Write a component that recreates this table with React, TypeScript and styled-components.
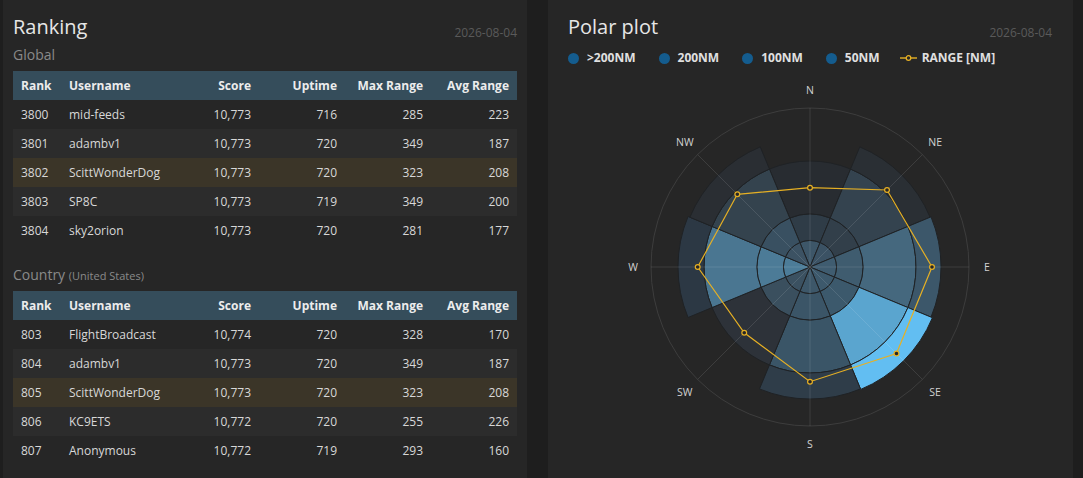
import React from 'react';
import styled, { createGlobalStyle } from 'styled-components';

const GlobalStyle = createGlobalStyle`
  html, body {
    margin: 0;
    padding: 0;
    background: #1e1e1e;
  }
  body {
    font-family: "Open Sans", "Liberation Sans", sans-serif;
  }
`;

type Row = {
  rank: number;
  user: string;
  score: string;
  uptime: number;
  max: number;
  avg: number;
  mine?: boolean;
};

const GLOBAL_ROWS: Row[] = [
  { rank: 3800, user: 'mid-feeds', score: '10,773', uptime: 716, max: 285, avg: 223 },
  { rank: 3801, user: 'adambv1', score: '10,773', uptime: 720, max: 349, avg: 187 },
  { rank: 3802, user: 'ScittWonderDog', score: '10,773', uptime: 720, max: 323, avg: 208, mine: true },
  { rank: 3803, user: 'SP8C', score: '10,773', uptime: 719, max: 349, avg: 200 },
  { rank: 3804, user: 'sky2orion', score: '10,773', uptime: 720, max: 281, avg: 177 },
];

const COUNTRY_ROWS: Row[] = [
  { rank: 803, user: 'FlightBroadcast', score: '10,774', uptime: 720, max: 328, avg: 170 },
  { rank: 804, user: 'adambv1', score: '10,773', uptime: 720, max: 349, avg: 187 },
  { rank: 805, user: 'ScittWonderDog', score: '10,773', uptime: 720, max: 323, avg: 208, mine: true },
  { rank: 806, user: 'KC9ETS', score: '10,772', uptime: 720, max: 255, avg: 226 },
  { rank: 807, user: 'Anonymous', score: '10,772', uptime: 719, max: 293, avg: 160 },
];

const COLUMNS = [
  { label: 'Rank', width: 48, align: 'left' },
  { label: 'Username', width: 112, align: 'left' },
  { label: 'Score', width: 86, align: 'right' },
  { label: 'Uptime', width: 86, align: 'right' },
  { label: 'Max Range', width: 86, align: 'right' },
  { label: 'Avg Range', width: 86, align: 'right' },
] as const;

// polar chart geometry (px): 50NM = 26.5, 100NM = 53, 200NM = 106, 300NM = 159
const CX = 242;
const CY = 192;
const RINGS = [0, 26.5, 53, 106];
const OUTER = 159;

const SECTORS = [
  { dir: 'N', angle: 0, outer: 106, range: 79.3, fills: ['#3d5668', '#2f3c47', '#282c31'] },
  { dir: 'NE', angle: 45, outer: 130, range: 108.9, fills: ['#3b5264', '#323f4a', '#34434f', '#2a2f34'] },
  { dir: 'E', angle: 90, outer: 131, range: 122, fills: ['#3f5c70', '#3f5c6f', '#45687e', '#3c576a'] },
  { dir: 'SE', angle: 135, outer: 132.5, range: 122.3, fills: ['#3d596c', '#3c596c', '#5aa5cf', '#62bef2'] },
  { dir: 'S', angle: 180, outer: 132, range: 114.7, fills: ['#3d5769', '#3b5567', '#3a5567', '#2f3d49'] },
  { dir: 'SW', angle: 225, outer: 106, range: 93, fills: ['#3b5161', '#3a4f5e', '#2d3239'] },
  { dir: 'W', angle: 270, outer: 132, range: 112.3, fills: ['#4c7c98', '#4c7b97', '#4a7691', '#2c3844'] },
  { dir: 'NW', angle: 315, outer: 130, range: 102.8, fills: ['#3c5263', '#395061', '#34434e', '#2a2e33'] },
];

const pt = (deg: number, r: number) => {
  const a = (deg * Math.PI) / 180;
  return [CX + r * Math.sin(a), CY - r * Math.cos(a)];
};

const f = (n: number) => n.toFixed(2);

const segment = (a1: number, a2: number, r0: number, r1: number) => {
  const [ox1, oy1] = pt(a1, r1);
  const [ox2, oy2] = pt(a2, r1);
  if (r0 === 0) {
    return `M${CX},${CY} L${f(ox1)},${f(oy1)} A${r1},${r1} 0 0 1 ${f(ox2)},${f(oy2)} Z`;
  }
  const [ix1, iy1] = pt(a1, r0);
  const [ix2, iy2] = pt(a2, r0);
  return `M${f(ox1)},${f(oy1)} A${r1},${r1} 0 0 1 ${f(ox2)},${f(oy2)} L${f(ix2)},${f(iy2)} A${r0},${r0} 0 0 0 ${f(ix1)},${f(iy1)} Z`;
};

const RankTable = ({ rows }: { rows: Row[] }) => (
  <Table>
    <colgroup>
      {COLUMNS.map((c) => (
        <Col key={c.label} $w={c.width} />
      ))}
    </colgroup>
    <thead>
      <tr>
        {COLUMNS.map((c) => (
          <Th key={c.label} $align={c.align}>
            {c.label}
          </Th>
        ))}
      </tr>
    </thead>
    <tbody>
      {rows.map((r) => (
        <Tr key={r.rank} $mine={r.mine}>
          <Td>{r.rank}</Td>
          <Td>{r.user}</Td>
          <Td $align="right">{r.score}</Td>
          <Td $align="right">{r.uptime}</Td>
          <Td $align="right">{r.max}</Td>
          <Td $align="right">{r.avg}</Td>
        </Tr>
      ))}
    </tbody>
  </Table>
);

const PolarChart = () => {
  const rangePts = SECTORS.map((s) => pt(s.angle, s.range));
  return (
    <ChartSvg width={484} height={400} viewBox="0 0 484 400">
      <circle cx={CX} cy={CY} r={OUTER} fill="none" stroke="#3d3d3d" strokeWidth={1} />
      {SECTORS.map((s) =>
        s.fills.map((fill, i) => {
          const r0 = RINGS[i];
          const r1 = i < 3 ? RINGS[i + 1] : s.outer;
          return (
            <path
              key={`${s.dir}-${i}`}
              d={segment(s.angle - 22.5, s.angle + 22.5, r0, r1)}
              fill={fill}
              stroke="#1f2225"
              strokeWidth={1}
            />
          );
        })
      )}
      {SECTORS.map((s) => {
        const [x, y] = pt(s.angle, OUTER);
        return (
          <line key={`g-${s.dir}`} x1={CX} y1={CY} x2={x} y2={y} stroke="rgba(255,255,255,0.11)" strokeWidth={1} />
        );
      })}
      <polygon
        points={rangePts.map(([x, y]) => `${f(x)},${f(y)}`).join(' ')}
        fill="none"
        stroke="#e6b024"
        strokeWidth={1.2}
      />
      {rangePts.map(([x, y], i) => (
        <circle key={`m-${i}`} cx={x} cy={y} r={2.4} fill="#262626" stroke="#e6b024" strokeWidth={1.2} />
      ))}
      {SECTORS.map((s) => {
        const [x, y] = pt(s.angle, 177);
        return (
          <DirLabel key={`l-${s.dir}`} x={x} y={y} textAnchor="middle" dominantBaseline="central">
            {s.dir}
          </DirLabel>
        );
      })}
    </ChartSvg>
  );
};

const LEGEND = ['>200NM', '200NM', '100NM', '50NM'];

export default function App() {
  return (
    <>
      <GlobalStyle />
      <Page>
        <Panel $w={524} $pl={10} $pr={10}>
          <TitleRow>
            <Title>Ranking</Title>
            <DateText>2026-08-04</DateText>
          </TitleRow>
          <Subtitle>Global</Subtitle>
          <RankTable rows={GLOBAL_ROWS} />
          <Subtitle $gapTop>
            Country <Small>(United States)</Small>
          </Subtitle>
          <RankTable rows={COUNTRY_ROWS} />
        </Panel>
        <Panel $w={525} $pl={20} $pr={21}>
          <TitleRow>
            <Title>Polar plot</Title>
            <DateText>2026-08-04</DateText>
          </TitleRow>
          <Legend>
            {LEGEND.map((l) => (
              <LegendItem key={l}>
                <Dot />
                {l}
              </LegendItem>
            ))}
            <LegendItem $tight>
              <svg width={17} height={8} viewBox="0 0 17 8">
                <line x1={0} y1={4} x2={17} y2={4} stroke="#e6b024" strokeWidth={1.4} />
                <circle cx={8.5} cy={4} r={2.3} fill="#262626" stroke="#e6b024" strokeWidth={1.3} />
              </svg>
              RANGE [NM]
            </LegendItem>
          </Legend>
          <PolarChart />
        </Panel>
      </Page>
    </>
  );
}

const Page = styled.div`
  display: flex;
  gap: 21px;
  padding-left: 3px;
  height: 478px;
  overflow: hidden;
  box-sizing: border-box;
`;

const Panel = styled.section<{ $w: number; $pl: number; $pr: number }>`
  width: ${(p) => p.$w}px;
  flex: none;
  box-sizing: border-box;
  background: #262626;
  padding: 13px ${(p) => p.$pr}px 0 ${(p) => p.$pl}px;
  display: flex;
  flex-direction: column;
`;

const TitleRow = styled.div`
  display: flex;
  justify-content: space-between;
  align-items: flex-start;
  height: 27px;
`;

const Title = styled.h2`
  margin: 0;
  font-size: 20px;
  line-height: 27px;
  font-weight: 400;
  color: #e6e6e6;
`;

const DateText = styled.span`
  margin-top: 12px;
  font-size: 12px;
  line-height: 16px;
  color: #5a5a5a;
`;

const Subtitle = styled.div<{ $gapTop?: boolean }>`
  margin: ${(p) => (p.$gapTop ? '20px 0 5px' : '5px 0 6px')};
  font-size: 14px;
  line-height: 20px;
  color: #8a8a8a;
`;

const Small = styled.span`
  font-size: 11px;
`;

const Table = styled.table`
  width: 100%;
  border-collapse: collapse;
  table-layout: fixed;
`;

const Col = styled.col<{ $w: number }>`
  width: ${(p) => p.$w}px;
`;

const Th = styled.th<{ $align: string }>`
  height: 29px;
  padding: 0 8px;
  background: #354d5b;
  color: #ececec;
  font-size: 12px;
  font-weight: 700;
  text-align: ${(p) => p.$align};
  white-space: nowrap;
`;

const Tr = styled.tr<{ $mine?: boolean }>`
  background: transparent;
  &:nth-child(even) {
    background: #2c2c2c;
  }
  && {
    ${(p) => (p.$mine ? 'background: #3b3528;' : '')}
  }
`;

const Td = styled.td<{ $align?: string }>`
  height: 29px;
  padding: 0 8px;
  font-size: 12px;
  color: #d8d8d8;
  text-align: ${(p) => p.$align || 'left'};
  white-space: nowrap;
`;

const Legend = styled.div`
  display: flex;
  align-items: center;
  gap: 23px;
  margin-top: 10px;
  height: 16px;
`;

const LegendItem = styled.div<{ $tight?: boolean }>`
  display: flex;
  align-items: center;
  gap: ${(p) => (p.$tight ? '5px' : '8px')};
  font-size: 12px;
  font-weight: 700;
  line-height: 16px;
  color: #e0e0e0;
  margin-left: ${(p) => (p.$tight ? '-3px' : '0')};
`;

const Dot = styled.span`
  width: 11px;
  height: 11px;
  border-radius: 50%;
  background: #145c8e;
`;

const ChartSvg = styled.svg`
  display: block;
  margin-top: 9px;
`;

const DirLabel = styled.text`
  font-family: "Open Sans", "Liberation Sans", sans-serif;
  font-size: 10.5px;
  fill: #d2d2d2;
`;
